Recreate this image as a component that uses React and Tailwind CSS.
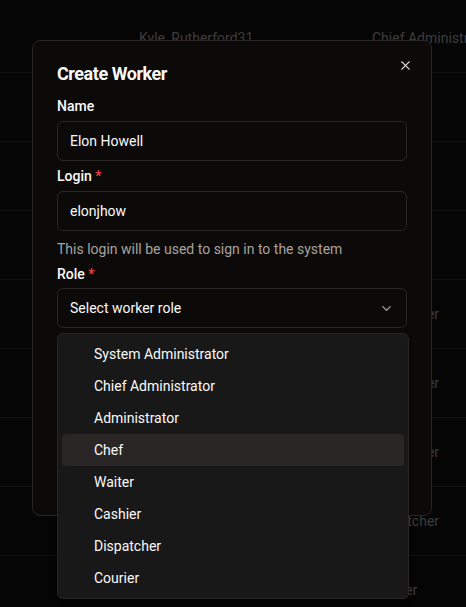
import React from 'react';
import { X, ChevronDown } from 'lucide-react';

const roles = [
  'System Administrator',
  'Chief Administrator',
  'Administrator',
  'Chef',
  'Waiter',
  'Cashier',
  'Dispatcher',
  'Courier',
];

// rows of the workers table sitting behind the dialog overlay
const rows = [
  { login: 'Kyle_Rutherford31', role: 'Chief Administrator' },
  { login: 'Mara.Kuhlman', role: 'Chef' },
  { login: 'Jonas_Wiza', role: 'Waiter' },
  { login: 'Trent.Fadel', role: 'Cashier' },
  { login: 'Lela_Hills', role: 'Dispatcher' },
  { login: 'Aida.Bode', role: 'Dispatcher' },
  { login: 'Grady88', role: 'Dispatcher' },
  { login: 'Nico_Lang', role: 'Dispatcher' },
  { login: 'Rhea.Moen', role: 'Courier' },
];

export default function App() {
  return (
    <div
      className="relative w-[466px] h-[607px] overflow-hidden bg-[#050505] text-[#fafaf9]"
      style={{ fontFamily: 'Roboto, "Liberation Sans", sans-serif' }}
    >
      {/* Background table (dimmed by overlay) */}
      <div className="flex flex-col pt-[4px]">
        {rows.map((r, i) => (
          <div key={i} className="flex items-center h-[69px] border-b border-[#111111] text-sm text-[#3d3d3d]">
            <span className="w-[139px] shrink-0" />
            <span className="w-[233px] shrink-0 truncate">{r.login}</span>
            <span className="whitespace-nowrap">{r.role}</span>
          </div>
        ))}
      </div>

      {/* Dialog */}
      <div className="absolute left-[32px] top-[40px] w-[400px] h-[476px] rounded-lg border border-[#292524] bg-[#0c0a09] px-6 pt-[24px]">
        <button className="absolute right-[18px] top-[17px] text-[#d6d3d1]">
          <X size={15} strokeWidth={1.75} />
        </button>
        <h2 className="text-lg font-bold leading-none tracking-tight h-[18px]">Create Worker</h2>

        <label className="block mt-[16px] text-sm font-medium leading-none">Name</label>
        <div className="mt-[8px] h-[40px] rounded-md border border-[#292524] px-3 flex items-center text-sm">
          Elon Howell
        </div>

        <label className="block mt-[8px] text-sm font-medium leading-none">
          Login <span className="text-[#ef4444]">*</span>
        </label>
        <div className="mt-[8px] h-[40px] rounded-md border border-[#292524] px-3 flex items-center text-sm">
          elonjhow
        </div>
        <p className="mt-[8px] text-sm leading-5 text-[#a8a29e]">This login will be used to sign in to the system</p>

        <label className="block mt-[8px] text-sm font-medium leading-none">
          Role <span className="text-[#ef4444]">*</span>
        </label>
        <div className="mt-[7px] h-[40px] rounded-md border border-[#292524] px-3 flex items-center justify-between text-sm">
          <span>Select worker role</span>
          <ChevronDown size={15} className="text-[#a8a29e]" />
        </div>
      </div>

      {/* Select dropdown */}
      <div className="absolute left-[57px] top-[333px] w-[352px] rounded-md border border-[#292524] bg-[#181818] p-1 shadow-md">
        {roles.map((role) => (
          <div
            key={role}
            className={`h-[32px] flex items-center pl-8 rounded-sm text-sm ${role === 'Chef' ? 'bg-[#2a2625]' : ''}`}
          >
            {role}
          </div>
        ))}
      </div>
    </div>
  );
}
